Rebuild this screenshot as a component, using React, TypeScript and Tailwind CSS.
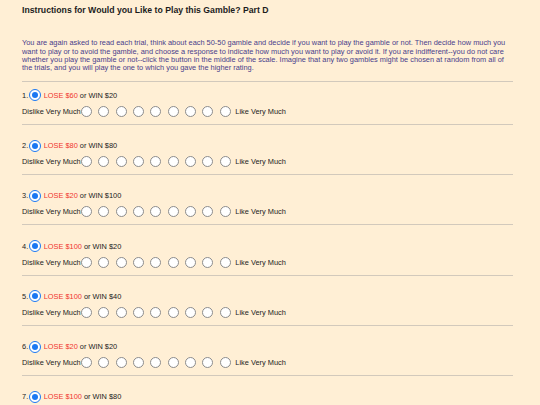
import React from "react";

const items = [
  { lose: "$60", win: "$20" },
  { lose: "$80", win: "$80" },
  { lose: "$20", win: "$100" },
  { lose: "$100", win: "$20" },
  { lose: "$100", win: "$40" },
  { lose: "$20", win: "$20" },
  { lose: "$100", win: "$80" },
];

function Selected() {
  return (
    <span className="mx-[0.5px] flex h-[12px] w-[12px] shrink-0 items-center justify-center rounded-full border-[1.5px] border-[#1b78f2] bg-white">
      <span className="h-[6px] w-[6px] rounded-full bg-[#1b78f2]" />
    </span>
  );
}

function Circle() {
  return <span className="h-[11px] w-[11px] shrink-0 rounded-full border border-[#8c8c8c] bg-white" />;
}

export default function App() {
  return (
    <div
      className="min-h-screen w-full bg-[#FFEFD5] px-[22px]"
      style={{ fontFamily: '"Liberation Sans", Arial, sans-serif' }}
    >
      <div className="w-[491px]">
        <h1 className="pt-[4.5px] text-[8.7px] font-bold leading-[10px] text-[#1c1c1c]">
          Instructions for Would you Like to Play this Gamble? Part D
        </h1>
        <p className="mt-[24.6px] whitespace-nowrap text-[7.4px] leading-[8.4px] text-[#483D8B]">
          You are again asked to read each trial, think about each 50-50 gamble and decide if you want to play the gamble or not. Then decide how much you
          <br />
          want to play or to avoid the gamble, and choose a response to indicate how much you want to play or avoid it. If you are indifferent--you do not care
          <br />
          whether you play the gamble or not--click the button in the middle of the scale. Imagine that any two gambles might be chosen at random from all of
          <br />
          the trials, and you will play the one to which you gave the higher rating.
        </p>
        <div className="mt-[8px] h-px w-full bg-[#d2c9bc]" />
        {items.map((it, i) => (
          <div key={i} className={i === 0 ? "pt-[7.5px]" : "pt-[14.8px]"}>
            <div className="flex h-[12px] items-center text-[7.4px] text-[#222]">
              <span>{i + 1}.</span>
              <Selected />
              <span className="ml-[2.5px] text-[#f0352c]">LOSE {it.lose}</span>
              <span className="ml-[2px]">or WIN {it.win}</span>
            </div>
            <div className="mt-[4.5px] flex h-[11px] items-center text-[7.4px] text-[#222]">
              <span>Dislike Very Much</span>
              <div className="flex gap-[6.4px]">
                {Array.from({ length: 9 }).map((_, k) => (
                  <Circle key={k} />
                ))}
              </div>
              <span className="ml-[4.5px]">Like Very Much</span>
            </div>
            <div className="mt-[7px] h-px w-full bg-[#d2c9bc]" />
          </div>
        ))}
      </div>
    </div>
  );
}
